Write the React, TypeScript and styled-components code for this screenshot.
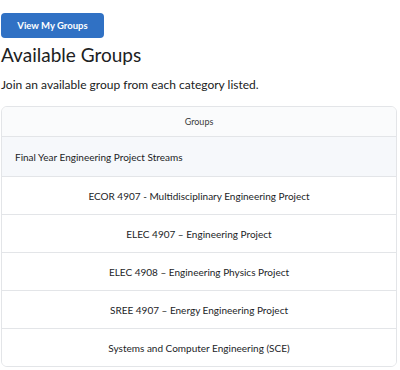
import { createGlobalStyle, styled } from "styled-components";

const GlobalStyle = createGlobalStyle`
  body {
    margin: 0;
    background: #ffffff;
    font-family: Lato, "Noto Sans", sans-serif;
    color: #202122;
  }
`;

const Page = styled.div`
  padding: 13px 3px 0 1px;
  display: flex;
  flex-direction: column;
`;

const Button = styled.button`
  align-self: flex-start;
  width: 103px;
  height: 25px;
  border: none;
  border-radius: 4px;
  background-color: #3071c4;
  color: #ffffff;
  font-family: Lato, sans-serif;
  font-weight: 700;
  font-size: 9.5px;
  padding: 0;
  cursor: pointer;
`;

const Title = styled.h1`
  margin: 4px 0 0;
  font-size: 19px;
  font-weight: 400;
  line-height: 26px;
`;

const Intro = styled.p`
  margin: 9px 0 0;
  font-size: 12px;
  line-height: 16px;
`;

const Table = styled.div`
  margin-top: 13px;
  border: 1px solid #e3e5e8;
  border-radius: 6px;
  overflow: hidden;
  display: flex;
  flex-direction: column;
`;

const HeadRow = styled.div`
  height: 29px;
  display: flex;
  align-items: center;
  justify-content: center;
  background: #fafbfc;
  border-bottom: 1px solid #e3e5e8;
  font-size: 9px;
  color: #3a3b3d;
`;

const Row = styled.div<{ $group?: boolean }>`
  height: ${(p) => (p.$group ? "39px" : "37px")};
  display: flex;
  align-items: center;
  justify-content: ${(p) => (p.$group ? "flex-start" : "center")};
  padding-left: ${(p) => (p.$group ? "13px" : "0")};
  background: ${(p) => (p.$group ? "#f6f8fb" : "#ffffff")};
  font-size: 10px;
  color: #1c1d1f;
  & + & {
    border-top: 1px solid #e3e5e8;
  }
`;

const groups = [
  "ECOR 4907 - Multidisciplinary Engineering Project",
  "ELEC 4907 – Engineering Project",
  "ELEC 4908 – Engineering Physics Project",
  "SREE 4907 – Energy Engineering Project",
  "Systems and Computer Engineering (SCE)",
];

export default function App() {
  return (
    <>
      <GlobalStyle />
      <Page>
        <Button>View My Groups</Button>
        <Title>Available Groups</Title>
        <Intro>Join an available group from each category listed.</Intro>
        <Table>
          <HeadRow>Groups</HeadRow>
          <Row $group>Final Year Engineering Project Streams</Row>
          {groups.map((g) => (
            <Row key={g}>{g}</Row>
          ))}
        </Table>
      </Page>
    </>
  );
}
